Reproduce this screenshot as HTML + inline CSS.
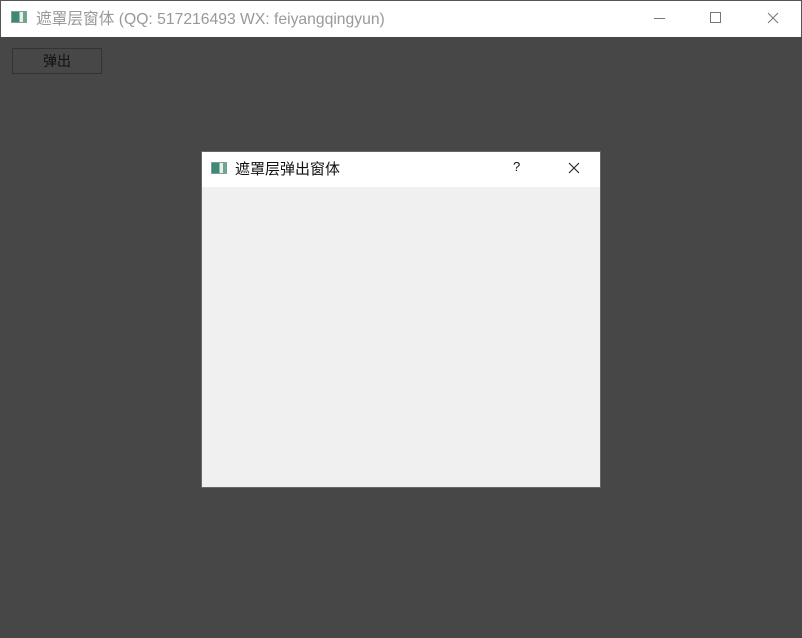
<!DOCTYPE html><html><head><style>
body{margin:0;width:802px;height:638px;overflow:hidden;background:#474747;font-family:"Liberation Sans","Noto Sans CJK SC",sans-serif;position:relative}
.tb{position:absolute;left:0;top:0;width:800px;height:36px;background:#fff;border:1px solid #555;border-bottom:none}
.ic{position:absolute;width:16px;height:12px;border:1px solid #8a9a9a;background:linear-gradient(90deg,#3c8a76 0 55%,#e8eee8 55% 80%,#6a8 80%);box-sizing:border-box}
.t{position:absolute;font-size:15px;white-space:nowrap}
.btn{position:absolute;left:12px;top:48px;width:88px;height:24px;border:1px solid #333;background:#474747;font-size:14px;text-align:center;line-height:24px;color:#111}
.dlg{position:absolute;left:201px;top:151px;width:398px;height:335px;border:1px solid #666;background:#f0f0f0}
.dt{position:absolute;left:0;top:0;width:398px;height:35px;background:#fff}
</style></head><body>
<div class="tb">
<div class="ic" style="left:10px;top:10px"></div>
<div class="t" style="left:35px;top:5px;color:#999;font-size:15.7px">遮罩层窗体 (QQ: 517216493 WX: feiyangqingyun)</div>
<div style="position:absolute;left:653px;top:17px;width:11px;height:1px;background:#777"></div>
<div style="position:absolute;left:709px;top:11px;width:9px;height:9px;border:1px solid #777"></div>
<svg style="position:absolute;left:766px;top:11px" width="12" height="12"><path d="M1 1L11 11M11 1L1 11" stroke="#777" stroke-width="1"/></svg>
</div>
<div class="btn">弹出</div>
<div class="dlg"><div class="dt">
<div class="ic" style="left:9px;top:10px"></div>
<div class="t" style="left:33px;top:6px;color:#111">遮罩层弹出窗体</div>
<div class="t" style="left:311px;top:7px;font-size:13px;color:#111">?</div>
<svg style="position:absolute;left:366px;top:10px" width="12" height="12"><path d="M1 1L11 11M11 1L1 11" stroke="#222" stroke-width="1.1"/></svg>
</div></div>
</body></html>
